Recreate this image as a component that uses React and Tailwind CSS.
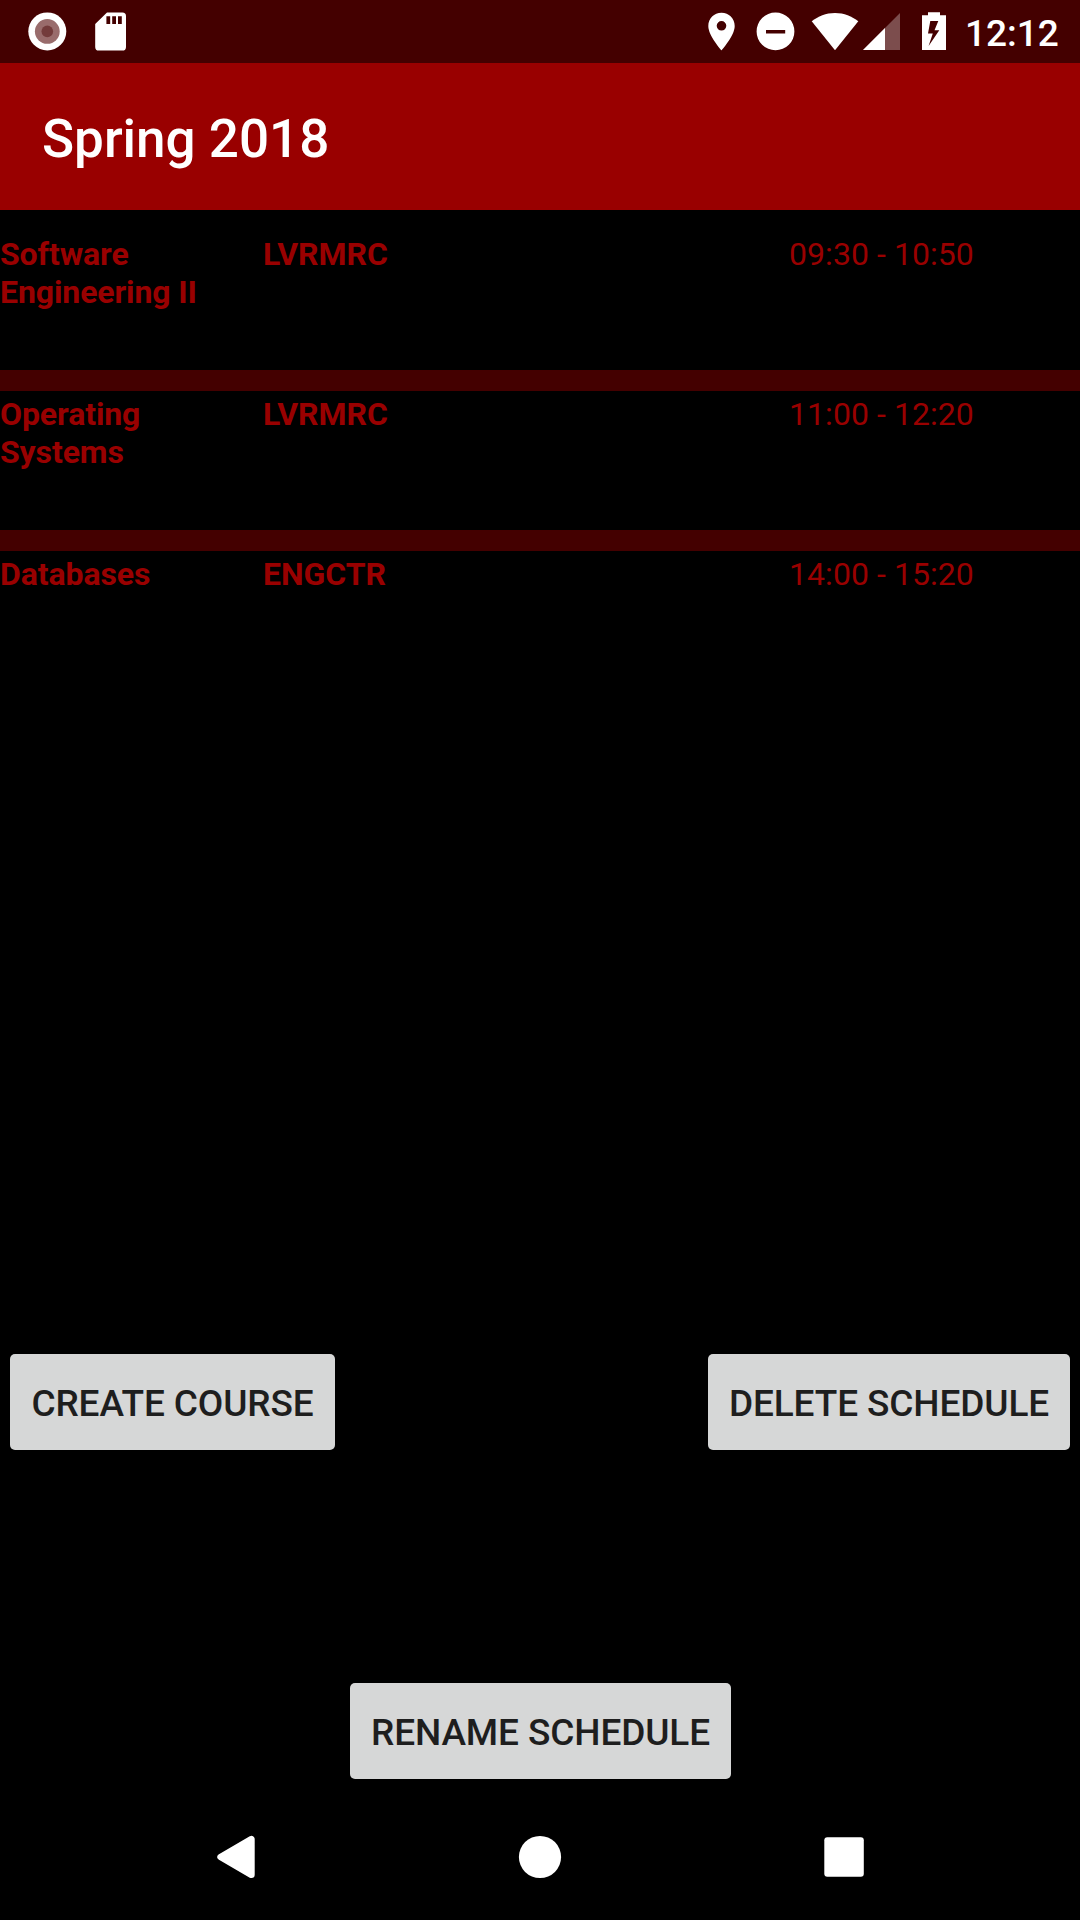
import React from "react";

const courses = [
  { name: "Software Engineering II", place: "LVRMRC", time: "09:30 - 10:50" },
  { name: "Operating Systems", place: "LVRMRC", time: "11:00 - 12:20" },
  { name: "Databases", place: "ENGCTR", time: "14:00 - 15:20" },
];

function StatusBar() {
  return (
    <header className="flex h-[63px] shrink-0 items-start justify-between bg-[#440000] text-white">
      <svg className="h-[63px] w-[140px]" viewBox="0 0 140 63" fill="currentColor">
        <circle cx="47.3" cy="31.4" r="19" />
        <circle cx="47.3" cy="31.4" r="12.4" fill="#996c6c" />
        <circle cx="47.3" cy="31.4" r="5.8" fill="#733b3b" />
        <path
          fillRule="evenodd"
          d="M107 12.5h15.4a3.6 3.6 0 0 1 3.6 3.6v30.8a3.6 3.6 0 0 1-3.6 3.6H98.8a3.6 3.6 0 0 1-3.6-3.6V24zM106.4 16.3v7.7h3.8v-7.7zM112.2 16.3v7.7h3.8v-7.7zM118 16.3v7.7h3.8v-7.7z"
        />
      </svg>
      <div className="flex">
        <svg className="h-[63px] w-[260px]" viewBox="700 0 260 63" fill="currentColor">
          <path
            fillRule="evenodd"
            d="M721.5 12.8c-7.4 0-13.2 5.8-13.2 13.1 0 9.8 13.2 24.3 13.2 24.3s13.2-14.5 13.2-24.3c0-7.3-5.8-13.1-13.2-13.1zm0 17.8a4.8 4.8 0 1 1 0-9.6 4.8 4.8 0 0 1 0 9.6z"
          />
          <path
            fillRule="evenodd"
            d="M775.5 12.5a18.9 18.9 0 1 0 0 37.8 18.9 18.9 0 0 0 0-37.8zM766 30v3.4h19.2V30z"
          />
          <path d="M811.7 21.2C818 16.2 826 12.9 835 12.9S852 16.2 858.3 21.2L835 50.2z" />
          <path d="M863 50.1L900 13V50.1z" opacity="0.3" />
          <path d="M863 50.1L885 28V50.1z" />
          <path
            fillRule="evenodd"
            d="M928 12.2h12V15.2h6V50.1h-24V15.2h6zM930.3 21L928 33.5H932.8L928.6 46L939.3 30.2H934.5L938.3 21z"
          />
        </svg>
        <span className="w-[120px] pl-[5px] pt-[2px] text-[37px] font-medium leading-[64px]">12:12</span>
      </div>
    </header>
  );
}

function ActionButton({ children, className }) {
  return (
    <button
      className={`h-24 rounded-[5px] bg-[#d6d7d7] pt-[3px] text-center text-[37px] font-medium leading-[93px] tracking-[-0.12px] whitespace-nowrap text-[#1e1e1e] ${className}`}
    >
      {children}
    </button>
  );
}

export default function App() {
  return (
    <div className="flex h-[1920px] w-[1080px] flex-col overflow-hidden bg-black font-[Roboto,sans-serif]">
      <StatusBar />
      <div className="flex h-[147px] shrink-0 items-center bg-[#990000] pl-[42px] pt-[5px]">
        <h1 className="text-[53px] font-medium leading-[62px] text-white">Spring 2018</h1>
      </div>
      <main className="flex flex-1 flex-col">
        <ul className="mt-[21px] flex h-[1123px] flex-col divide-y-[21px] divide-[#440000] text-[32px] leading-[38px] text-[#990000]">
          {courses.map((c, i) => (
            <li
              key={c.name}
              className={`flex pt-1 ${i < courses.length - 1 ? "h-40" : "h-[139px]"}`}
            >
              <span className="w-[263px] pr-10 font-bold tracking-[-0.1px]">{c.name}</span>
              <span className="w-[526px] font-bold tracking-[-0.05px]">{c.place}</span>
              <span className="tracking-[0.06px]">{c.time}</span>
            </li>
          ))}
        </ul>
        <div className="flex justify-between px-2.5">
          <ActionButton className="w-[325px]">CREATE COURSE</ActionButton>
          <ActionButton className="w-[362px]">DELETE SCHEDULE</ActionButton>
        </div>
        <div className="mt-[233px] flex pl-[350px]">
          <ActionButton className="w-[381px]">RENAME SCHEDULE</ActionButton>
        </div>
      </main>
      <nav className="h-[126px] shrink-0">
        <svg className="block h-[126px] w-[1080px]" viewBox="0 1794 1080 126" fill="white">
          <path
            d="M220.6 1857L251.4 1839.2V1874.8z"
            stroke="white"
            strokeWidth="6.6"
            strokeLinejoin="round"
          />
          <circle cx="540" cy="1857" r="21.1" />
          <rect x="824.3" y="1837.2" width="39.5" height="39.6" rx="3" />
        </svg>
      </nav>
    </div>
  );
}
